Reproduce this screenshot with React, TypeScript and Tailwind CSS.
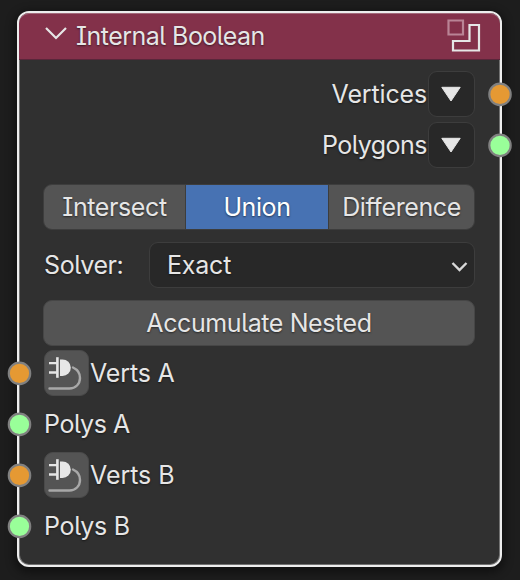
import type { ReactNode } from 'react';

const TEXT =
  "whitespace-nowrap leading-none [text-shadow:0_1px_2px_rgba(0,0,0,0.55)]";

function Socket({ color, side }: { color: string; side: 'left' | 'right' }) {
  return (
    <svg
      className={`absolute top-1/2 -translate-y-1/2 ${side === 'left' ? '-left-[38px]' : '-right-[38px]'}`}
      width="26"
      height="26"
      viewBox="0 0 26 26"
    >
      <circle cx={side === 'left' ? 13.5 : 13} cy="13.4" r="10.7" fill={color} stroke="#808080" strokeWidth="2.2" />
    </svg>
  );
}

function OutputRow({ label, color, spacing }: { label: string; color: string; spacing: string }) {
  return (
    <div className="relative flex h-[46px] items-center justify-end">
      <span className={`${TEXT} ${spacing} mr-[1px]`}>{label}</span>
      <button className="flex h-[46px] w-[47px] items-center justify-center rounded-[9px] border border-[#3d3d3d] bg-[#282828]">
        <svg width="22" height="18" viewBox="0 0 22 18" className="mr-[1px]">
          <path d="M1.8 2.3h18.4L11 16z" fill="#e6e6e6" stroke="#e6e6e6" strokeWidth="1" strokeLinejoin="round" />
        </svg>
      </button>
      <Socket color={color} side="right" />
    </div>
  );
}

function PlugButton() {
  return (
    <button className="h-[46px] w-[45px] shrink-0 rounded-[9px] border border-[#4a4a4a] bg-[#545454]">
      <svg width="43" height="44" viewBox="0 0 43 44" fill="none">
        <path d="M4 12.1h8M4 21.5h8" stroke="#e6e6e6" strokeWidth="2.4" />
        <path d="M12.4 6.2v20.6" stroke="#e6e6e6" strokeWidth="2.6" />
        <path d="M15 8.4h2.500a8.3 8.3 0 0 1 0 16.600h-2.500z" fill="#e6e6e6" />
        <path d="M28 16.5c4.5 2 7 5.5 7 10.500 0 6-4.500 10.500-10.500 10.500H4.500" stroke="#a8a8a8" strokeWidth="2.4" strokeLinecap="round" />
      </svg>
    </button>
  );
}

function InputRow({ color, children }: { color: string; children: ReactNode }) {
  return (
    <div className="relative flex h-[46px] items-center">
      <Socket color={color} side="left" />
      {children}
    </div>
  );
}

export default function App() {
  return (
    <main className="h-[580px] w-[520px] overflow-hidden bg-[#1d1d1d] pl-[17px] pt-[11px] font-['Inter','Noto_Sans',sans-serif] text-[25px] tracking-[-0.4px] text-[#e6e6e6] [font-feature-settings:'cv05','cv08']">
      <section className="h-[556px] w-[485px] rounded-[12px] border-2 border-[#ededed] bg-[#303030] shadow-[inset_0_0_0_1px_rgba(237,237,237,0.35),0_3px_9px_3px_rgba(0,0,0,0.4)]">
        <header className="flex h-[47px] items-center rounded-t-[10px] border-b border-[#59263a] bg-[#83314a] pl-[26px] pr-[19px] shadow-[inset_0_1px_0_rgba(237,237,237,0.3)]">
          <svg width="23" height="14" viewBox="0 0 23 14" fill="none" className="mb-[6px] shrink-0">
            <path d="M1 2 11 12 21 2" stroke="#e6e6e6" strokeWidth="2.2" />
          </svg>
          <h1 className={`${TEXT} ml-[8px] tracking-[-0.53px]`}>Internal Boolean</h1>
          <svg width="34" height="34" viewBox="0 0 34 34" fill="none" className="ml-auto">
            <path d="M1.5 1.5h14.500v14H1.500z" stroke="#b98495" strokeWidth="2.2" />
            <path d="M22.5 6h9.500v25.500H6V22h16.500z" stroke="#e6e6e6" strokeWidth="2.2" />
          </svg>
        </header>

        <div className="flex flex-col pl-[25px] pr-[25px] pt-[11px]">
          <div className="flex flex-col gap-[5px]">
            <OutputRow label="Vertices" color="#e59933" spacing="tracking-[-0.15px]" />
            <OutputRow label="Polygons" color="#99ff99" spacing="tracking-[-0.5px]" />
          </div>

          <div className="mt-[16px] -ml-px grid h-[46px] grid-cols-[141px_144px_1fr] overflow-hidden rounded-[9px] border border-[#3d3d3d] bg-[#545454]">
            <button className={TEXT}>Intersect</button>
            <button className={`${TEXT} border-x border-[#3d3d3d] bg-[#4772b3] text-white`}>Union</button>
            <button className={TEXT}>Difference</button>
          </div>

          <div className="mt-[12px] flex h-[46px] items-center">
            <span className={`${TEXT} w-[105px]`}>Solver:</span>
            <button className="flex h-[46px] flex-1 items-center justify-between rounded-[9px] border border-[#3d3d3d] bg-[#282828] pl-[17px] pr-[6px]">
              <span className={`${TEXT} tracking-[-0.2px]`}>Exact</span>
              <svg width="17" height="12" viewBox="0 0 17 12" fill="none" className="mt-[4px]">
                <path d="M1.5 2 8.500 9 15.500 2" stroke="#d9d9d9" strokeWidth="2.4" />
              </svg>
            </button>
          </div>

          <button className={`${TEXT} -ml-px mt-[12px] h-[46px] rounded-[9px] border border-[#464646] bg-[#545454]`}>
            Accumulate Nested
          </button>

          <div className="mt-[4px] flex flex-col gap-[5px]">
            <InputRow color="#e59933">
              <PlugButton />
              <span className={`${TEXT} ml-px tracking-[-0.15px]`}>Verts A</span>
            </InputRow>
            <InputRow color="#99ff99">
              <span className={TEXT}>Polys A</span>
            </InputRow>
            <InputRow color="#e59933">
              <PlugButton />
              <span className={`${TEXT} ml-px tracking-[-0.05px]`}>Verts B</span>
            </InputRow>
            <InputRow color="#99ff99">
              <span className={`${TEXT} tracking-[-0.3px]`}>Polys B</span>
            </InputRow>
          </div>
        </div>
      </section>
    </main>
  );
}
